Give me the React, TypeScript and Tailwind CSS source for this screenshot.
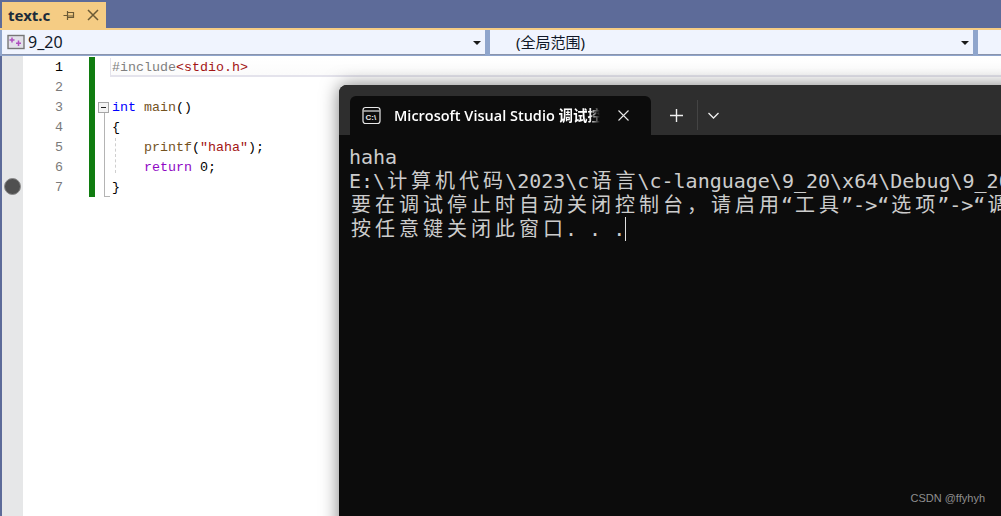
const mono = "font-['Liberation_Mono','Noto_Sans_CJK_SC',monospace]";
// console cells are 24px wide for CJK, glyphs sit in the middle of the cell
const cjk = "ml-[2px] -mr-[2px] tracking-[4px]";

function Combo({ className, text, arrow = true }: { className: string; text?: React.ReactNode; arrow?: boolean }) {
  return (
    <div className={`flex h-[25px] items-center border-b border-b-[#8a94ac] bg-[#f0f4fe] ${className}`}>
      <div className="flex-1 min-w-0">{text}</div>
      {arrow && <div className="mr-[4px] mt-px h-0 w-0 border-x-[4px] border-t-[4px] border-x-transparent border-t-[#1a1a1a]" />}
    </div>
  );
}

function Line({ n, active, children }: { n: number; active?: boolean; children?: React.ReactNode }) {
  return (
    <div className="flex h-5 items-center">
      <div className={`w-[40px] pt-[2px] text-right text-[13.33px] ${mono} ${active ? "text-black" : "text-[#7a7a7a]"}`}>{n}</div>
      <div className="ml-[26px] h-5 w-[6px] bg-[#107c10]" />
      <div className={`ml-[17px] flex-1 whitespace-pre pt-[2px] text-[13.33px] leading-5 ${mono} text-black`}>{children}</div>
    </div>
  );
}

export default function App() {
  return (
    <div className="relative h-[516px] w-[1001px] overflow-hidden bg-white">
      <div className="flex h-7 items-end bg-[#5d6b99] pl-[2px]">
        <div className="flex h-[26px] w-[104px] items-center bg-[#f5cc84] pl-[6px] font-['Noto_Sans',sans-serif] text-[15px] font-bold text-[#1c2b3a]">
          text.c
          <svg className="ml-[13px]" width="12" height="12" viewBox="0 0 12 12" fill="none" stroke="#6b5a35" strokeWidth="1.2">
            <path d="M0.5 6.5H4M4.5 2V11M4.5 3.5H10.5V8.5H4.5M4.5 7H10.5" />
          </svg>
          <svg className="ml-[12px]" width="12" height="12" viewBox="0 0 12 12" fill="none" stroke="#6b5a35" strokeWidth="1.5">
            <path d="M1 1L11 11M11 1L1 11" />
          </svg>
        </div>
      </div>
      <div className="h-[2px] bg-[#f5cc84]" />
      <div className="flex h-[26px] gap-[5px] bg-[#8fa5cc] pl-[2px]">
        <Combo
          className="w-[483px]"
          text={
            <div className="flex items-center gap-[3px] pl-[5px] font-['Noto_Sans',sans-serif] text-[16px] leading-5 text-[#101828]">
              <svg width="18" height="16" viewBox="0 0 18 16">
                <rect x="1" y="1.5" width="16" height="13" fill="#e3e1ea" stroke="#777" strokeWidth="1.4" />
                <path d="M5 3.5V8.5M2.5 6H7.5M11.5 6.5V12M9 9.2H14" stroke="#b04fc0" strokeWidth="1.5" />
              </svg>
              9_20
            </div>
          }
        />
        <Combo
          className="w-[483px]"
          text={<div className="pl-[26px] font-['Noto_Sans','Noto_Sans_CJK_SC',sans-serif] text-[15px] leading-5 text-[#101828]">(全局范围)</div>}
        />
        <Combo className="flex-1" arrow={false} />
      </div>
      <div className="flex h-[460px] bg-white">
        <div className="relative w-[23px] bg-[#e6e7e8]">
          <div className="absolute left-0 top-0 h-full w-[2px] bg-[#5d6b99]" />
          <div className="absolute left-[4px] top-[122px] h-[17px] w-[17px] rounded-full border border-[#8a8a8a] bg-[#505050]" />
        </div>
        <div className="relative flex-1 pt-[1px]">
          <div className="absolute left-[87px] right-0 top-[2px] h-[19px] border-b-2 border-l border-[#e4e3ec] bg-gradient-to-b from-white to-[#fbfbfb]" />
          <div className="relative">
            <Line n={1} active>
              <span className="text-[#808080]">#include</span>
              <span className="text-[#a31515]">{"<stdio.h>"}</span>
            </Line>
            <Line n={2} />
            <Line n={3}>
              <span className="text-[#0000ff]">int</span> <span className="text-[#74531f]">main</span>()
            </Line>
            <Line n={4}>{"{"}</Line>
            <Line n={5}>
              {"    "}
              <span className="text-[#74531f]">printf</span>(<span className="text-[#a31515]">"haha"</span>);
            </Line>
            <Line n={6}>
              {"    "}
              <span className="text-[#8f08c4]">return</span> 0;
            </Line>
            <Line n={7}>{"}"}</Line>
          </div>
          <div className="absolute left-[75px] top-[46px] flex h-[11px] w-[11px] items-center justify-center border border-[#a6a6a6] bg-[#f4f4f4]">
            <div className="h-px w-[5px] bg-[#222]" />
          </div>
          <div className="absolute left-[81px] top-[57px] h-[84px] w-[6px] border-b border-l border-[#b4b4b4]" />
          <div className="absolute left-[92px] top-[82px] h-[35px] border-l border-dashed border-[#cfcfcf]" />
        </div>
      </div>

      {/* console window floats over the editor */}
      <div className="absolute left-[339px] top-[85px] h-[460px] w-[700px] rounded-t-[8px] bg-[#0c0c0c] shadow-[0_0_18px_rgba(0,0,0,0.5)]">
        <div className="flex h-[50px] items-end rounded-t-[8px] bg-[#2e2e2e] pl-[11px]">
          <div className="flex h-[39px] w-[301px] items-center rounded-t-[6px] bg-[#0c0c0c] pl-[12px] font-['Open_Sans','Noto_Sans_CJK_SC',sans-serif] text-[14.5px] font-semibold text-white">
            <svg width="19" height="19" viewBox="0 0 19 19" fill="none">
              <rect x="1" y="1.5" width="17" height="16" rx="2.5" stroke="#e8e8e8" strokeWidth="1.2" />
              <path d="M1.5 5H17.5" stroke="#e8e8e8" strokeWidth="1.2" />
              <text x="3.5" y="14" fill="#e8e8e8" fontSize="8" fontWeight="600" fontFamily="Liberation Sans, sans-serif">C:\</text>
            </svg>
            <div className="ml-[13px] w-[206px] overflow-hidden whitespace-nowrap [mask-image:linear-gradient(to_right,black_95%,transparent)]">
              Microsoft Visual Studio 调试控制台
            </div>
            <svg className="ml-[18px]" width="11" height="11" viewBox="0 0 11 11" stroke="#e8e8e8" strokeWidth="1.1">
              <path d="M0.5 0.5L10.5 10.5M10.5 0.5L0.5 10.5" />
            </svg>
          </div>
          <div className="mb-[5px] flex items-center">
            <svg className="ml-[19px]" width="13" height="13" viewBox="0 0 13 13" stroke="#efefef" strokeWidth="1.4">
              <path d="M6.5 0V13M0 6.5H13" />
            </svg>
            <div className="ml-[14px] h-[30px] w-px bg-[#444]" />
            <svg className="ml-[10px]" width="11" height="7" viewBox="0 0 11 7" fill="none" stroke="#efefef" strokeWidth="1.3">
              <path d="M0.5 1L5.5 6L10.5 1" />
            </svg>
          </div>
        </div>
        <div className="whitespace-nowrap pl-[10px] pt-[10px] font-['DejaVu_Sans_Mono','Noto_Sans_CJK_SC',monospace] text-[20px] leading-[24px] text-[#cccccc]">
          <div>haha</div>
          <div>
            E:\<span className={cjk}>计算机代码</span>\2023\c<span className={cjk}>语言</span>\c-language\9_20\x64\Debug\9_20
          </div>
          <div>
            <span className={cjk}>要在调试停止时自动关闭控制台，请启用</span>“<span className={cjk}>工具</span>”-&gt;“<span className={cjk}>选项</span>”-&gt;“<span className={cjk}>调</span>
          </div>
          <div className="flex items-center">
            <span className={cjk}>按任意键关闭此窗口</span>. . .
            <div className="h-[24px] w-px bg-[#e0e0e0]" />
          </div>
        </div>
      </div>

      <div className="absolute bottom-[10px] right-[16px] font-['Liberation_Sans',sans-serif] text-[11px] text-[#8f8f8f]">CSDN @ffyhyh</div>
    </div>
  );
}
